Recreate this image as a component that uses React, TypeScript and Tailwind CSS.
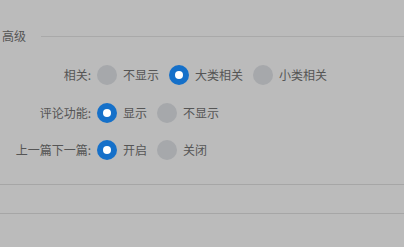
import React from "react";

type Option = { label: string; checked?: boolean };

const rows: { label: string; options: Option[] }[] = [
  {
    label: "相关:",
    options: [{ label: "不显示" }, { label: "大类相关", checked: true }, { label: "小类相关" }],
  },
  {
    label: "评论功能:",
    options: [{ label: "显示", checked: true }, { label: "不显示" }],
  },
  {
    label: "上一篇下一篇:",
    options: [{ label: "开启", checked: true }, { label: "关闭" }],
  },
];

function Radio({ checked }: { checked?: boolean }) {
  if (checked) {
    return (
      <span className="flex h-5 w-5 shrink-0 items-center justify-center rounded-full bg-[#1570c9]">
        <span className="h-2 w-2 rounded-full bg-white" />
      </span>
    );
  }
  return <span className="h-5 w-5 shrink-0 rounded-full bg-[#a6a8ab]" />;
}

export default function App() {
  return (
    <div
      className="h-[247px] w-[404px] overflow-hidden bg-[#bbbbbb] text-[12px] text-[#555555]"
      style={{ fontFamily: '"Noto Sans CJK SC", "Noto Sans", sans-serif' }}
    >
      <div className="mt-[26px] flex h-5 items-center">
        <span className="ml-[2px] leading-5">高级</span>
        <span className="ml-[15px] h-px flex-1 bg-[#a9a9a9]" />
      </div>

      <div className="mt-[10px] flex flex-col">
        {rows.map((row, i) => (
          <div key={row.label} className={`flex items-center ${i === 0 ? "h-[38px]" : "h-[37px]"}`}>
            <span className="w-[91px] shrink-0 text-right leading-5">{row.label}</span>
            <div className="ml-[6px] flex items-center">
              {row.options.map((opt) => (
                <label key={opt.label} className="mr-[10px] flex items-center">
                  <Radio checked={opt.checked} />
                  <span className="ml-[6px] leading-5">{opt.label}</span>
                </label>
              ))}
            </div>
          </div>
        ))}
      </div>

      <div className="mt-[16px] h-px bg-[#a6a6a6]" />
      <div className="mt-[28px] h-px bg-[#a6a6a6]" />
    </div>
  );
}
